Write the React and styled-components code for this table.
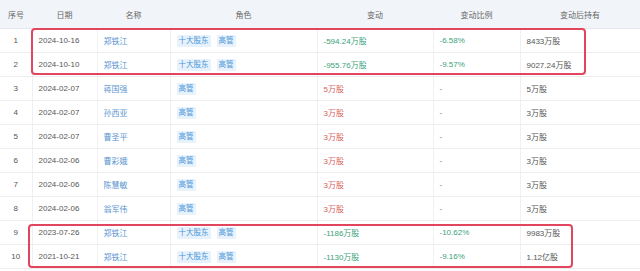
import React from "react";
import styled, { createGlobalStyle } from "styled-components";

const GlobalStyle = createGlobalStyle`
  html, body {
    margin: 0;
    padding: 0;
    background: #ffffff;
  }
  body {
    font-family: "Liberation Sans", "Noto Sans CJK SC", sans-serif;
  }
`;

const Wrapper = styled.div`
  position: relative;
  width: 640px;
  height: 271px;
  overflow: hidden;
  background: #fff;
`;

const Table = styled.table`
  width: 640px;
  border-collapse: collapse;
  table-layout: fixed;
  font-size: 8px;
  color: #555;
`;

const HeadCell = styled.th`
  height: 28px;
  padding: 0;
  background: #f1f5f9;
  color: #666;
  font-weight: normal;
  text-align: center;
  border-bottom: 1px solid #e6eaf0;
`;

const Row = styled.tr`
  height: 24px;
`;

const Cell = styled.td`
  padding: 0 6px;
  border-bottom: 1px solid #ededed;
  border-left: 1px solid #f0f0f0;
  white-space: nowrap;
  text-align: ${(p) => (p.$center ? "center" : "left")};
  color: ${(p) => p.$color || "#555"};
  &:first-child {
    border-left: none;
  }
`;

const Name = styled.span`
  color: #5b95cf;
`;

const Tags = styled.div`
  display: flex;
  gap: 6px;
  align-items: center;
`;

const Tag = styled.span`
  display: inline-block;
  height: 12px;
  line-height: 12px;
  padding: 0 2px;
  font-size: 7.5px;
  background: #e7f2fc;
  color: #4a96d6;
  border-radius: 1px;
`;

const Highlight = styled.div`
  position: absolute;
  border: 2px solid #e2465e;
  border-radius: 4px;
  box-sizing: border-box;
  pointer-events: none;
`;

const GREEN = "#3aa27a";
const RED = "#d6625d";

const rows = [
  { no: 1, date: "2024-10-16", name: "郑铁江", roles: ["十大股东", "高管"], change: "-594.24万股", ratio: "-6.58%", held: "8433万股" },
  { no: 2, date: "2024-10-10", name: "郑铁江", roles: ["十大股东", "高管"], change: "-955.76万股", ratio: "-9.57%", held: "9027.24万股" },
  { no: 3, date: "2024-02-07", name: "蒋国强", roles: ["高管"], change: "5万股", ratio: "-", held: "5万股" },
  { no: 4, date: "2024-02-07", name: "孙西亚", roles: ["高管"], change: "3万股", ratio: "-", held: "3万股" },
  { no: 5, date: "2024-02-07", name: "曹圣平", roles: ["高管"], change: "3万股", ratio: "-", held: "3万股" },
  { no: 6, date: "2024-02-06", name: "曹彩娥", roles: ["高管"], change: "3万股", ratio: "-", held: "3万股" },
  { no: 7, date: "2024-02-06", name: "陈慧敏", roles: ["高管"], change: "3万股", ratio: "-", held: "3万股" },
  { no: 8, date: "2024-02-06", name: "翁军伟", roles: ["高管"], change: "3万股", ratio: "-", held: "3万股" },
  { no: 9, date: "2023-07-26", name: "郑铁江", roles: ["十大股东", "高管"], change: "-1186万股", ratio: "-10.62%", held: "9983万股" },
  { no: 10, date: "2021-10-21", name: "郑铁江", roles: ["十大股东", "高管"], change: "-1130万股", ratio: "-9.16%", held: "1.12亿股" },
];

const widths = [32, 65, 73, 147, 116, 87, 120];
const headers = ["序号", "日期", "名称", "角色", "变动", "变动比例", "变动后持有"];

export default function App() {
  return (
    <Wrapper>
      <GlobalStyle />
      <Table>
        <colgroup>
          {widths.map((w, i) => (
            <col key={i} style={{ width: w }} />
          ))}
        </colgroup>
        <thead>
          <tr>
            {headers.map((h) => (
              <HeadCell key={h}>{h}</HeadCell>
            ))}
          </tr>
        </thead>
        <tbody>
          {rows.map((r) => {
            const down = r.change.startsWith("-");
            return (
              <Row key={r.no}>
                <Cell $center>{r.no}</Cell>
                <Cell>{r.date}</Cell>
                <Cell>
                  <Name>{r.name}</Name>
                </Cell>
                <Cell>
                  <Tags>
                    {r.roles.map((t) => (
                      <Tag key={t}>{t}</Tag>
                    ))}
                  </Tags>
                </Cell>
                <Cell $color={down ? GREEN : RED}>{r.change}</Cell>
                <Cell $color={r.ratio === "-" ? "#777" : GREEN}>{r.ratio}</Cell>
                <Cell>{r.held}</Cell>
              </Row>
            );
          })}
        </tbody>
      </Table>
      <Highlight style={{ left: 31, top: 28, width: 555, height: 47 }} />
      <Highlight style={{ left: 28, top: 224, width: 545, height: 44 }} />
    </Wrapper>
  );
}
